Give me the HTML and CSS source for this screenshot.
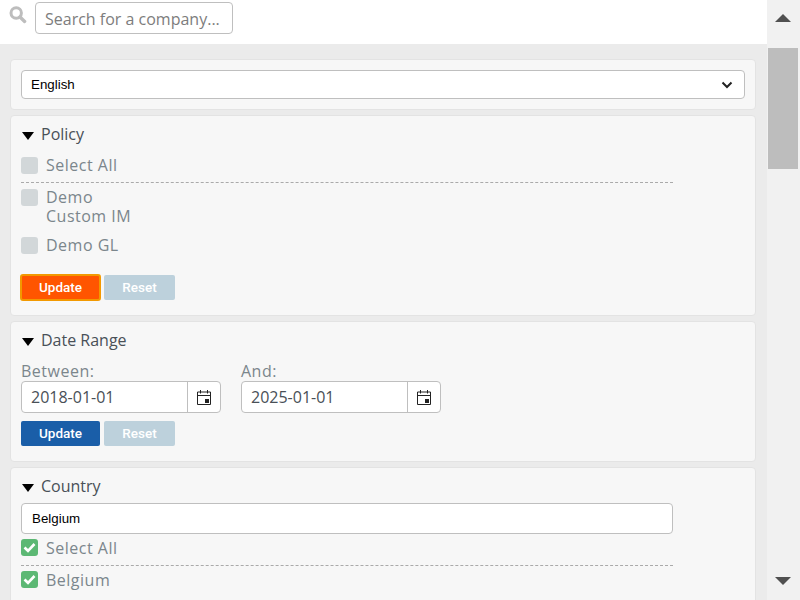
FILE: index.html
```html
<!DOCTYPE html>
<html lang="en">
<head>
	<meta charset="UTF-8">
	<title>Filters</title>
	<link rel="stylesheet" href="styles.css">
</head>
<body>
	<div class="page">
		<div class="main">
			<div class="search">
				<svg class="search-icon" width="18" height="18" viewBox="0 0 18 18">
					<circle cx="7.2" cy="7" r="5.200" fill="none" stroke="#bdbdbd" stroke-width="3"/>
					<path d="M11 11l4.600 4.400" stroke="#bdbdbd" stroke-width="3.400" stroke-linecap="round"/>
				</svg>
				<input class="search-input" type="text" placeholder="Search for a company...">
			</div>
			<div class="filters">
				<div class="card lang-card">
					<div class="select">
						<span>English</span>
						<svg width="12" height="8" viewBox="0 0 12 8"><path d="M1.500 1.500L6 6l4.500-4.500" fill="none" stroke="#222" stroke-width="2"/></svg>
					</div>
				</div>

				<div class="card policy-card">
					<div class="card-title"><span class="caret"></span>Policy</div>
					<div class="list">
						<label class="check select-all"><span class="box"></span>Select All</label>
						<label class="check two-line"><span class="box"></span><span>Demo<br>Custom IM</span></label>
						<label class="check"><span class="box"></span>Demo GL</label>
					</div>
					<div class="buttons policy-buttons">
						<button class="btn btn-orange">Update</button>
						<button class="btn btn-muted">Reset</button>
					</div>
				</div>

				<div class="card">
					<div class="card-title"><span class="caret"></span>Date Range</div>
					<div class="dates">
						<div class="date-field">
							<div class="date-label">Between:</div>
							<div class="date-input">
								<span class="date-value">2018-01-01</span>
								<span class="date-btn">
									<svg width="14" height="15" viewBox="0 0 14 15"><path d="M.5 2h13v12.500H.5zM.5 5.500h13M3.500 0v3.500M10.500 0v3.500" fill="none" stroke="#222"/><rect x="8" y="9" width="4" height="4" fill="#222"/></svg>
								</span>
							</div>
						</div>
						<div class="date-field">
							<div class="date-label">And:</div>
							<div class="date-input">
								<span class="date-value">2025-01-01</span>
								<span class="date-btn">
									<svg width="14" height="15" viewBox="0 0 14 15"><path d="M.5 2h13v12.500H.5zM.5 5.500h13M3.500 0v3.500M10.500 0v3.500" fill="none" stroke="#222"/><rect x="8" y="9" width="4" height="4" fill="#222"/></svg>
								</span>
							</div>
						</div>
					</div>
					<div class="buttons">
						<button class="btn btn-blue">Update</button>
						<button class="btn btn-muted">Reset</button>
					</div>
				</div>

				<div class="card country-card">
					<div class="card-title"><span class="caret"></span>Country</div>
					<div class="list country-list">
						<input class="country-input" type="text" value="Belgium">
						<label class="check select-all"><span class="box checked"><svg width="13" height="11" viewBox="0 0 13 11"><path d="M1.500 5.500l3.500 3.300 6.500-6.800" fill="none" stroke="#fff" stroke-width="2.600"/></svg></span>Select All</label>
						<label class="check"><span class="box checked"><svg width="13" height="11" viewBox="0 0 13 11"><path d="M1.500 5.500l3.500 3.300 6.500-6.800" fill="none" stroke="#fff" stroke-width="2.600"/></svg></span>Belgium</label>
					</div>
				</div>
			</div>
		</div>
		<div class="scrollbar">
			<span class="arrow-up"></span>
			<div class="thumb"></div>
			<span class="arrow-down"></span>
		</div>
	</div>
</body>
</html>
```

FILE: styles.css
```css
html, body {
	margin: 0;
	height: 600px;
	overflow: hidden;
}
body {
	font-family: "Open Sans", sans-serif;
	font-size: 16px;
	color: #7b868c;
}
.page {
	display: flex;
	height: 600px;
}
.main {
	width: 767px;
	height: 600px;
	overflow: hidden;
	background: #ebebeb;
}
.search {
	display: flex;
	align-items: flex-start;
	height: 44px;
	padding-left: 9px;
	box-sizing: border-box;
	background: #fff;
}
.search-icon {
	margin-top: 6px;
	margin-right: 8px;
}
.search-input {
	box-sizing: border-box;
	width: 198px;
	height: 32px;
	margin-top: 2px;
	padding: 2px 9px 0;
	font-family: "Open Sans", sans-serif;
	font-size: 16px;
	background: #fff;
	border: 1px solid #bfbfbf;
	border-radius: 4px;
}
.search-input::placeholder {
	color: #7d7d7d;
	opacity: 1;
}
.filters {
	padding: 15px 11px 0 10px;
}
.card {
	box-sizing: border-box;
	margin-bottom: 5px;
	padding: 10px 10px 15px;
	background: #f7f7f7;
	border: 1px solid #e3e3e3;
	border-radius: 4px;
}
.lang-card {
	height: 51px;
}
.select {
	display: flex;
	align-items: center;
	justify-content: space-between;
	box-sizing: border-box;
	height: 29px;
	padding: 0 11px 0 9px;
	font-family: "Liberation Sans", sans-serif;
	font-size: 13.33px;
	color: #000;
	background: #fff;
	border: 1px solid #bfbfbf;
	border-radius: 4px;
}
.card-title {
	display: flex;
	align-items: center;
	height: 24px;
	margin-top: -4px;
	color: #495057;
}
.caret {
	width: 0;
	height: 0;
	margin: 3px 7px 0 1px;
	border-left: 6px solid transparent;
	border-right: 6px solid transparent;
	border-top: 8px solid #000;
}
.list {
	width: 652px;
}
.check {
	display: flex;
	align-items: flex-start;
	line-height: 19px;
	letter-spacing: 0.5px;
	margin-top: 10px;
}
.box {
	flex: none;
	display: flex;
	align-items: center;
	justify-content: center;
	width: 17px;
	height: 17px;
	margin-top: 1px;
	margin-right: 8px;
	background: #d2d7d9;
	border-radius: 3px;
}
.box.checked {
	margin-top: 0;
	background: #5cb874;
}
.select-all {
	margin-top: 10px;
	padding-bottom: 7px;
	border-bottom: 1px dashed #aaa;
}
.two-line {
	margin-top: 5px;
}
.buttons {
	display: flex;
	gap: 4px;
	margin-top: 8px;
}
.policy-buttons {
	margin-top: 20px;
}
.btn {
	box-sizing: border-box;
	width: 79px;
	height: 25px;
	padding: 0 0 2px;
	font-family: Roboto, sans-serif;
	font-size: 13.5px;
	font-weight: 500;
	color: #fff;
	border: 0;
	border-radius: 2px;
}
.btn-orange {
	background: #ff5500;
	outline: 2px solid #f29900;
	outline-offset: -1px;
}
.btn-blue {
	background: #1a5ea8;
}
.btn-muted {
	width: 71px;
	background: #bdd1dc;
}
.dates {
	display: flex;
	gap: 20px;
	margin-top: 10px;
}
.date-label {
	line-height: 19px;
	letter-spacing: 0.5px;
}
.date-input {
	display: flex;
	box-sizing: border-box;
	width: 200px;
	height: 32px;
	background: #fff;
	border: 1px solid #bfbfbf;
	border-radius: 4px;
}
.date-value {
	flex: 1;
	padding-left: 9px;
	line-height: 30px;
	color: #495057;
}
.date-btn {
	display: flex;
	align-items: center;
	justify-content: center;
	width: 32px;
	border-left: 1px solid #bfbfbf;
}
.country-card {
	height: 200px;
}
.country-list {
	margin-top: 5px;
}
.country-list .check {
	margin-top: 5px;
}
.country-input {
	display: block;
	box-sizing: border-box;
	width: 652px;
	height: 31px;
	padding: 0 10px;
	font-family: "Liberation Sans", sans-serif;
	font-size: 13.33px;
	color: #000;
	background: #fff;
	border: 1px solid #bfbfbf;
	border-radius: 4px;
}
.scrollbar {
	display: flex;
	flex-direction: column;
	width: 33px;
	height: 600px;
	box-sizing: border-box;
	padding: 14px 0 0 1px;
	background: #f1f1f1;
}
.arrow-up {
	width: 0;
	height: 0;
	margin-left: 7px;
	border-left: 8px solid transparent;
	border-right: 8px solid transparent;
	border-bottom: 8px solid #505050;
}
.thumb {
	width: 30px;
	height: 121px;
	margin-top: 26px;
	background: #bdbdbd;
}
.arrow-down {
	width: 0;
	height: 0;
	margin-top: 408px;
	margin-left: 7px;
	border-left: 8px solid transparent;
	border-right: 8px solid transparent;
	border-top: 8px solid #505050;
}
```
